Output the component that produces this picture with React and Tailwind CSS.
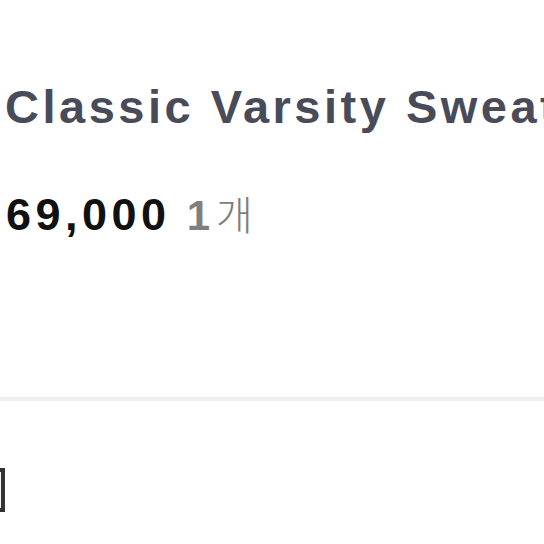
export default function App() {
  return (
    <div className="w-[544px] h-[544px] overflow-hidden bg-white">
      <div
        className="pt-[83px] pl-[5px] whitespace-nowrap text-[47px] leading-none font-bold tracking-[3.5px] text-[#4a4b59]"
        style={{ fontFamily: '"Liberation Sans", Arial, sans-serif' }}
      >
        Classic Varsity Sweatshirt
      </div>

      <div className="mt-[62px] pl-[6px] flex items-baseline whitespace-nowrap leading-none">
        <span
          className="text-[45px] font-bold tracking-[4.5px] text-[#111111]"
          style={{ fontFamily: '"Liberation Sans", Arial, sans-serif' }}
        >
          69,000
        </span>
        <span
          className="ml-[16px] text-[42px] font-bold text-[#7f7f7f]"
          style={{ fontFamily: '"Liberation Sans", Arial, sans-serif' }}
        >
          1
        </span>
        <span
          className="ml-[6px] text-[40px] font-light text-[#7d7d7d]"
          style={{ fontFamily: '"Noto Sans CJK KR", sans-serif' }}
        >
          개
        </span>
      </div>

      <div className="mt-[160px] h-[4px] bg-[#eeeeee]" />

      <div className="mt-[67px] -ml-[39px] w-[44px] h-[44px] border-[4px] border-[#333333] bg-[#f4f4f4]" />
    </div>
  );
}
